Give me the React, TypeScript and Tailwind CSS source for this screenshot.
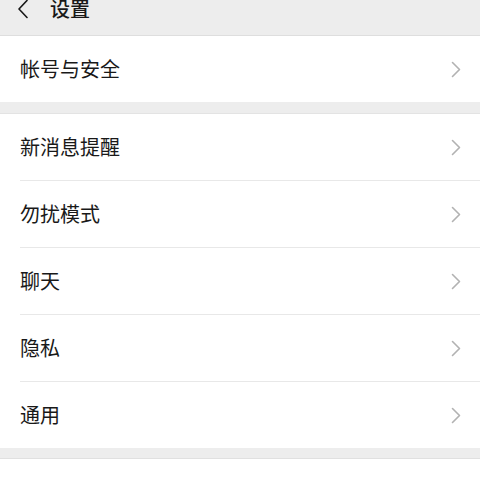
import React from "react";

const FONT = { fontFamily: '"Noto Sans CJK SC", "Noto Sans", sans-serif' };

function Chevron() {
  return (
    <svg width="10" height="17" viewBox="0 0 10 17" fill="none">
      <polyline
        points="1.5,1.5 8.5,8.5 1.5,15.5"
        stroke="#b2b2b2"
        strokeWidth="1.6"
        strokeLinecap="round"
        strokeLinejoin="round"
      />
    </svg>
  );
}

function Row({ label, last }: { label: string; last?: boolean }) {
  return (
    <div className="bg-white pl-5">
      <div
        className={
          "flex items-center justify-between pr-[19px] " +
          (last ? "h-[66px]" : "h-[67px] border-b border-[#e8e8e8]")
        }
      >
        <span className="text-[20px] leading-none text-[#191919]">{label}</span>
        <Chevron />
      </div>
    </div>
  );
}

export default function App() {
  const group = ["新消息提醒", "勿扰模式", "聊天", "隐私", "通用"];
  return (
    <div className="h-[480px] w-[480px] overflow-hidden bg-[#ededed]" style={FONT}>
      {/* header, scrolled up a bit */}
      <div className="h-[36px] overflow-hidden border-b border-[#dedede] bg-[#ededed]">
        <div className="mt-[-2px] flex h-[22px] items-center">
          <svg width="12" height="20" viewBox="0 0 12 20" className="ml-[17px]" fill="none">
            <polyline
              points="10,1.5 2,10 10,18.5"
              stroke="#181818"
              strokeWidth="1.6"
              strokeLinecap="round"
              strokeLinejoin="round"
            />
          </svg>
          <span className="ml-[21px] text-[20px] font-medium leading-none text-[#181818]">设置</span>
        </div>
      </div>

      <Row label="帐号与安全" last />

      <div className="h-[11px]" />
      <div className="border-t border-[#e3e3e3]">
        {group.map((g, i) => (
          <Row key={g} label={g} last={i === group.length - 1} />
        ))}
      </div>

      <div className="h-[10px]" />
      <div className="h-[40px] border-t border-[#e0e0e0] bg-white" />
    </div>
  );
}
